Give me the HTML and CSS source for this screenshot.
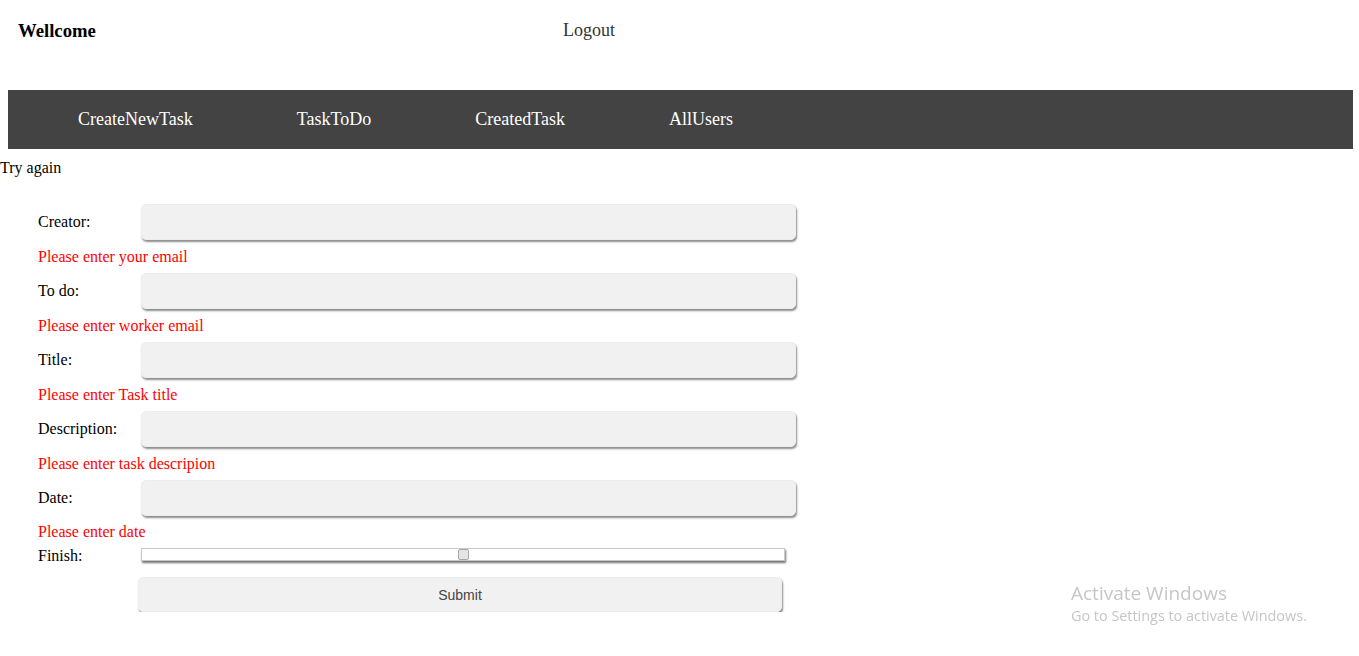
FILE: index.html
```html
<!DOCTYPE html>
<html>
<head>
<meta charset="utf-8">
<title>Tasks</title>
<link rel="stylesheet" href="styles.css">
</head>
<body>
<header class="top">
  <span class="welcome">Wellcome</span>
  <a class="logout" href="#">Logout</a>
</header>
<nav class="menu">
  <a href="#">CreateNewTask</a>
  <a href="#">TaskToDo</a>
  <a href="#">CreatedTask</a>
  <a href="#">AllUsers</a>
</nav>
<div class="status">Try again</div>
<form class="task-form">
  <div class="row"><label>Creator:</label><input class="field" type="text"></div>
  <div class="error">Please enter your email</div>
  <div class="row"><label>To do:</label><input class="field" type="text"></div>
  <div class="error">Please enter worker email</div>
  <div class="row"><label>Title:</label><input class="field" type="text"></div>
  <div class="error">Please enter Task title</div>
  <div class="row"><label>Description:</label><input class="field" type="text"></div>
  <div class="error">Please enter task descripion</div>
  <div class="row"><label>Date:</label><input class="field" type="text"></div>
  <div class="error last">Please enter date</div>
  <div class="row finish"><label>Finish:</label><input class="slider" type="range" min="0" max="100" value="50"></div>
  <button class="submit" type="button">Submit</button>
</form>
<div class="watermark">
  <div class="wm-title">Activate Windows</div>
  <div class="wm-sub">Go to Settings to activate Windows.</div>
</div>
</body>
</html>
```
FILE: styles.css
```css
html, body {
  margin: 0;
  padding: 0;
  background: #fff;
  font-family: "Liberation Serif", "Times New Roman", serif;
  font-size: 16px;
  color: #000;
}

.top {
  display: grid;
  grid-template-columns: 545px auto;
  align-items: center;
  height: 90px;
  padding: 0 0 28px 18px;
  box-sizing: border-box;
}

.welcome {
  font-weight: bold;
  font-size: 18.72px;
  line-height: 22px;
}

.logout {
  font-size: 18px;
  line-height: 22px;
  color: #333;
  text-decoration: none;
  margin-top: -2px;
}

.menu {
  display: flex;
  gap: 104px;
  height: 59px;
  margin: 0 6px 0 8px;
  padding: 0 0 2px 70px;
  box-sizing: border-box;
  background: #434343;
  align-items: center;
}

.menu a {
  color: #fff;
  text-decoration: none;
  font-size: 18px;
  line-height: 22px;
}

.status {
  margin-top: 10px;
  line-height: 18px;
}

.task-form {
  padding: 27px 0 0 38px;
  display: flex;
  flex-direction: column;
}

.row {
  display: flex;
  align-items: center;
  height: 36px;
}

.row label {
  width: 103px;
  flex: none;
}

.field {
  width: 655px;
  height: 36px;
  box-sizing: border-box;
  border: 1px solid #ededed;
  border-radius: 5px;
  background: #f1f1f1;
  box-shadow: 1px 2px 2px rgba(0, 0, 0, 0.45);
  margin: 0;
  padding: 0 8px;
  outline: none;
}

.error {
  color: #ff0000;
  height: 33px;
  line-height: 33px;
}

.error.last {
  height: 32px;
  line-height: 32px;
}

.row.finish {
  height: 18px;
  align-items: flex-start;
}

.row.finish label {
  line-height: 18px;
  margin-top: -1px;
}

.slider {
  -webkit-appearance: none;
  appearance: none;
  width: 644px;
  height: 13px;
  margin: 0;
  box-sizing: border-box;
  background: #fff;
  border: 1px solid #c8c8c8;
  box-shadow: 1px 2px 2px rgba(0, 0, 0, 0.55);
  outline: none;
}

.slider::-webkit-slider-thumb {
  -webkit-appearance: none;
  appearance: none;
  width: 11px;
  height: 11px;
  background: #e4e4e4;
  border: 1px solid #a8a8a8;
  border-radius: 2px;
  box-sizing: border-box;
}

.submit {
  margin: 11px 0 0 100px;
  width: 644px;
  height: 35px;
  box-sizing: border-box;
  border: 1px solid #ededed;
  border-radius: 5px;
  background: #f1f1f1;
  box-shadow: 1px 2px 2px rgba(0, 0, 0, 0.45);
  font-family: "Liberation Sans", Arial, sans-serif;
  font-size: 14px;
  color: #444;
  cursor: pointer;
}

.watermark {
  position: fixed;
  left: 1071px;
  top: 580px;
  color: #c6c6c6;
  font-family: "Open Sans", "Noto Sans", sans-serif;
}

.wm-title {
  font-size: 19px;
  line-height: 26px;
}

.wm-sub {
  font-size: 14.4px;
  line-height: 20px;
}
```
